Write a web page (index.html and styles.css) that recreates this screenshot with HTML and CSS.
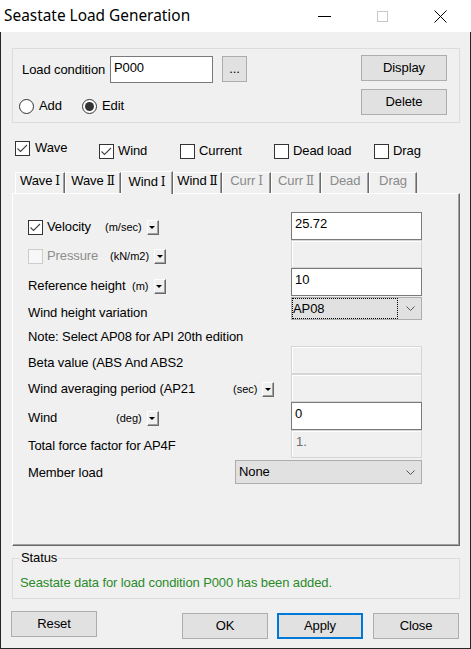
FILE: index.html
```html
<!DOCTYPE html>
<html lang="en">
<head>
<meta charset="utf-8">
<title>Seastate Load Generation</title>
<link rel="stylesheet" href="styles.css">
</head>
<body>
<div class="window">
  <header class="titlebar">
    <span class="title">Seastate Load Generation</span>
    <span class="cap"><svg width="13" height="13" viewBox="0 0 13 13"><rect x="0" y="6" width="13" height="1" fill="#000"/></svg></span>
    <span class="cap"><svg width="11" height="11" viewBox="0 0 11 11"><rect x="0.5" y="0.5" width="10" height="10" fill="none" stroke="#c8c8c8"/></svg></span>
    <span class="cap"><svg width="13" height="13" viewBox="0 0 13 13"><path d="M0.5 0.5L12.5 12.5M12.5 0.5L0.5 12.5" stroke="#000" stroke-width="1" fill="none"/></svg></span>
  </header>

  <main class="client">
    <section class="top-group">
      <div class="tg-left">
        <div class="lc-row">
          <span class="lc-label">Load condition</span>
          <div class="edit lc-edit">P000</div>
          <div class="btn dots">...</div>
        </div>
        <div class="radio-row">
          <label class="radio radio-add"><span class="circle"></span>Add</label>
          <label class="radio"><span class="circle on"></span>Edit</label>
        </div>
      </div>
      <div class="tg-right">
        <div class="btn">Display</div>
        <div class="btn">Delete</div>
      </div>
    </section>

    <div class="check-row">
      <label class="citem"><span class="chk"><svg width="13" height="13" viewBox="0 0 13 13"><polyline points="1.5,6.5 4.5,9.5 11,3" fill="none" stroke="#444" stroke-width="1.1"/></svg></span>Wave</label>
      <label class="citem low"><span class="chk"><svg width="13" height="13" viewBox="0 0 13 13"><polyline points="1.5,6.5 4.5,9.5 11,3" fill="none" stroke="#444" stroke-width="1.1"/></svg></span>Wind</label>
      <label class="citem low"><span class="chk"></span>Current</label>
      <label class="citem low"><span class="chk"></span>Dead load</label>
      <label class="citem low"><span class="chk"></span>Drag</label>
    </div>

    <nav class="tabs">
      <div class="tab t-w50">Wave <span class="rn">Ⅰ</span></div>
      <div class="tab t-w56">Wave <span class="rn">Ⅱ</span></div>
      <div class="tab sel t-w52">Wind <span class="rn">Ⅰ</span></div>
      <div class="tab t-w49">Wind <span class="rn">Ⅱ</span></div>
      <div class="tab dis t-w49">Curr <span class="rn">Ⅰ</span></div>
      <div class="tab dis t-w50">Curr <span class="rn">Ⅱ</span></div>
      <div class="tab dis t-w48">Dead</div>
      <div class="tab dis t-w48">Drag</div>
    </nav>

    <section class="panel">
      <div class="prow r-vel">
        <div class="pleft">
          <span class="lab lab-vel"><span class="chk"><svg width="13" height="13" viewBox="0 0 13 13"><polyline points="1.5,6.5 4.5,9.5 11,3" fill="none" stroke="#444" stroke-width="1.1"/></svg></span>Velocity</span>
          <span class="unit">(m/sec)</span><span class="ddbtn"></span>
        </div>
        <div class="edit pbox">25.72</div>
      </div>
      <div class="prow r-pres">
        <div class="pleft">
          <span class="lab lab-pres disabled"><span class="chk chk-dis"></span>Pressure</span>
          <span class="unit">(kN/m2)</span><span class="ddbtn"></span>
        </div>
        <div class="pbox dbox"></div>
      </div>
      <div class="prow r-ref">
        <div class="pleft">
          <span class="lab lab-ref">Reference height</span>
          <span class="unit">(m)</span><span class="ddbtn"></span>
        </div>
        <div class="edit pbox">10</div>
      </div>
      <div class="prow r-whv">
        <div class="pleft"><span class="lab">Wind height variation</span></div>
        <div class="combo combo-whv">
          <span class="focus">AP08</span>
          <svg class="chev" width="9" height="5" viewBox="0 0 9 5"><polyline points="0.5,0.5 4.5,4.5 8.5,0.5" fill="none" stroke="#555" stroke-width="1"/></svg>
        </div>
      </div>
      <div class="prow r-note">
        <div class="pleft"><span class="lab">Note: Select AP08 for API 20th edition</span></div>
      </div>
      <div class="prow r-beta">
        <div class="pleft"><span class="lab">Beta value (ABS And ABS2</span></div>
        <div class="pbox dbox"></div>
      </div>
      <div class="prow r-wavg">
        <div class="pleft">
          <span class="lab lab-wavg">Wind averaging period (AP21</span>
          <span class="unit">(sec)</span><span class="ddbtn"></span>
        </div>
        <div class="pbox dbox"></div>
      </div>
      <div class="prow r-wind">
        <div class="pleft">
          <span class="lab lab-wind">Wind</span>
          <span class="unit">(deg)</span><span class="ddbtn"></span>
        </div>
        <div class="edit pbox">0</div>
      </div>
      <div class="prow r-tff">
        <div class="pleft"><span class="lab">Total force factor for AP4F</span></div>
        <div class="pbox dbox dtext">1.</div>
      </div>
      <div class="prow r-mem">
        <div class="pleft"><span class="lab">Member load</span></div>
        <div class="combo combo-mem">
          <span class="ctext">None</span>
          <svg class="chev" width="9" height="5" viewBox="0 0 9 5"><polyline points="0.5,0.5 4.5,4.5 8.5,0.5" fill="none" stroke="#555" stroke-width="1"/></svg>
        </div>
      </div>
    </section>

    <fieldset class="status">
      <legend>Status</legend>
      <div class="status-text">Seastate data for load condition P000 has been added.</div>
    </fieldset>

    <div class="bottom">
      <div class="btn b-reset">Reset</div>
      <div class="btn b-ok">OK</div>
      <div class="btn b-apply">Apply</div>
      <div class="btn b-close">Close</div>
    </div>
  </main>
</div>
</body>
</html>
```
FILE: styles.css
```css
* { box-sizing: border-box; }
html, body { margin: 0; padding: 0; }
body {
  width: 471px;
  height: 649px;
  overflow: hidden;
  font-family: "Liberation Sans", "DejaVu Sans", Arial, sans-serif;
  font-size: 13px;
  letter-spacing: -0.1px;
  color: #000;
  background: #f0f0f0;
}
.window { width: 471px; height: 649px; display: flex; flex-direction: column; }

/* title bar */
.titlebar {
  height: 32px; flex-shrink: 0; background: #fff;
  display: flex; align-items: center; padding: 0 2px 0 4px;
}
.title { flex: 1; font-family: "Noto Sans", sans-serif; font-size: 15.4px; line-height: 20px; letter-spacing: 0; }
.cap { width: 58px; height: 32px; display: flex; align-items: center; justify-content: center; }
.cap svg { display: block; }

/* client */
.client {
  flex: 1; background: #f0f0f0;
  border: 1px solid #262626; border-top: none;
  padding: 0 10px 0 11px;
  display: flex; flex-direction: column;
}

.btn {
  background: #e1e1e1; border: 1px solid #adadad;
  display: flex; align-items: center; justify-content: center;
  line-height: 16px;
}
.edit {
  background: #fff; border: 1px solid #7a7a7a;
  padding: 3px 0 0 3px; line-height: 15px;
}

/* top group */
.top-group {
  margin-top: 16px; height: 75px;
  border: 1px solid #dcdcdc;
  display: flex; padding: 7px 12px 0 6px;
}
.tg-left { flex: 1; }
.lc-row { display: flex; align-items: center; height: 27px; }
.lc-label { margin-left: 3px; width: 88px; line-height: 16px; }
.lc-edit { width: 103px; height: 27px; }
.dots { width: 25px; height: 26px; margin-left: 9px; align-self: flex-start; }
.radio-row { display: flex; margin-top: 15px; }
.radio { display: flex; align-items: center; line-height: 16px; }
.radio-add { width: 63px; }
.circle {
  width: 15px; height: 15px; border: 1px solid #333; border-radius: 50%;
  background: #fff; margin-right: 5px;
  display: flex; align-items: center; justify-content: center;
}
.circle.on::after { content: ""; width: 9px; height: 9px; border-radius: 50%; background: #333; }
.tg-right { width: 86px; display: flex; flex-direction: column; margin-top: -1px; }
.tg-right .btn { height: 26px; }
.tg-right .btn + .btn { margin-top: 8px; }

/* checkboxes */
.chk {
  width: 15px; height: 15px; border: 1px solid #333; background: #fff;
  flex-shrink: 0; display: flex;
}
.chk svg { display: block; }
.chk-dis { border-color: #cccccc; background: #f7f7f7; }
.check-row {
  display: grid; grid-template-columns: 84px 81px 94px 100px auto;
  margin: 16px 0 0 3px; height: 19px; align-items: start;
}
.citem { display: flex; align-items: center; gap: 4px; line-height: 16px; }
.citem:first-child { gap: 5px; margin-top: 1px; }
.citem.low { margin-top: 4px; }

/* tabs */
.tabs {
  display: flex; align-items: flex-end; height: 22px;
  margin-top: 13px; padding-left: 3px;
  position: relative; z-index: 1;
}
.tab {
  height: 21px; background: #f0f0f0;
  border-top: 1px solid #fff; border-left: 1px solid #fff; border-right: 1px solid #696969;
  box-shadow: inset -1px 0 0 #a0a0a0;
  display: flex; justify-content: center;
  line-height: 16px; padding-top: 0; white-space: nowrap;
}
.rn { font-family: "DejaVu Serif", "Liberation Serif", serif; font-size: 12px; margin-left: 3px; }
.tab.sel { height: 23px; margin-bottom: -1px; padding-top: 2px; }
.tab.dis { color: #8a8a8a; }
.t-w48 { width: 48px; }
.t-w49 { width: 49px; }
.t-w50 { width: 50px; }
.t-w52 { width: 52px; }
.t-w56 { width: 56px; }

/* panel */
.panel {
  height: 353px;
  border: 1px solid; border-color: #fff #696969 #696969 #fff;
  box-shadow: inset -1px -1px 0 #a0a0a0;
  padding: 18px 37px 0 15px;
}
.prow { display: flex; align-items: flex-start; height: 28px; }
.pleft { display: flex; align-items: center; height: 16px; line-height: 16px; }
.lab { display: flex; align-items: center; gap: 4px; white-space: nowrap; }
.lab.disabled { color: #8d8d8d; }
.lab-vel { width: 77px; }
.lab-pres { width: 82px; }
.lab-ref { width: 104px; }
.lab-wavg { width: 205px; }
.lab-wind { width: 88px; }
.unit { font-size: 11px; line-height: 16px; margin-right: 5px; letter-spacing: 0; }
.ddbtn {
  width: 12px; height: 15px; background: #f0f0f0;
  border: 1px solid; border-color: #fff #696969 #696969 #fff;
  box-shadow: inset -1px -1px 0 #a0a0a0;
  display: flex; align-items: center; justify-content: center;
}
.ddbtn::after {
  content: ""; width: 0; height: 0;
  border-left: 3px solid transparent; border-right: 3px solid transparent;
  border-top: 3px solid #000; margin: 1px 1px 0 0;
}
.pbox { width: 131px; height: 28px; margin-left: auto; flex-shrink: 0; }
.dbox {
  background: #f0f0f0; border: 1px solid #d5d5d5;
  box-shadow: inset 1px 1px 0 #fff;
  padding: 3px 0 0 4px; line-height: 15px;
}
.dtext { color: #6d6d6d; }

.r-vel .pleft { margin-top: 7px; }
.r-pres .pleft { margin-top: 8px; }
.r-ref .pleft { margin-top: 10px; }
.r-whv { height: 24px; }
.r-whv .pleft { margin-top: 9px; }
.r-note { height: 26px; }
.r-note .pleft { margin-top: 9px; }
.r-beta .pleft { margin-top: 9px; }
.r-wavg .pleft { margin-top: 7px; }
.r-wind .pleft { margin-top: 8px; }
.r-tff .pleft { margin-top: 8px; }
.r-mem { height: 26px; }
.r-mem .pleft { margin-top: 7px; }

.combo {
  background: #e1e1e1; border: 1px solid #adadad;
  display: flex; align-items: center; margin-left: auto; flex-shrink: 0;
}
.combo-whv { width: 131px; height: 23px; margin-top: 1px; }
.focus {
  width: 106px; height: 21px; border: 1px dotted #000;
  display: flex; align-items: center; line-height: 16px;
}
.combo-mem { width: 187px; height: 24px; margin-top: 2px; padding-left: 3px; }
.ctext { line-height: 16px; }
.chev { margin-left: auto; margin-right: 6px; display: block; }

/* status */
.status {
  margin: 4px 0 0; min-width: 0;
  border: 1px solid #dcdcdc;
  padding: 9px 7px 7px;
}
.status legend { padding: 0 1px; line-height: 16px; }
.status-text { color: #2b8a2b; line-height: 16px; }

/* bottom buttons */
.bottom { display: flex; align-items: flex-start; margin-top: 12px; }
.bottom .btn { width: 86px; height: 26px; }
.b-reset { margin-left: -1px; }
.b-ok { margin-left: auto; margin-top: 2px; }
.b-apply { margin-left: 9px; margin-top: 2px; border: 2px solid #0078d7; }
.b-close { margin-left: 10px; margin-right: 1px; margin-top: 2px; }
```
